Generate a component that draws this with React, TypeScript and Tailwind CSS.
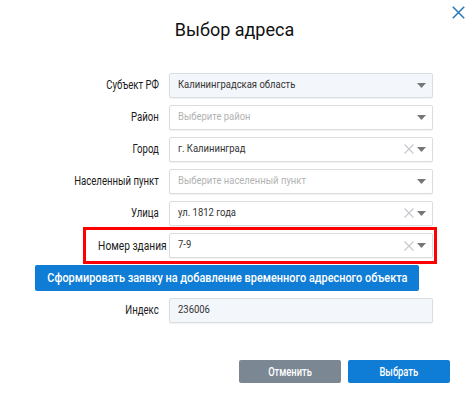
import React from 'react';

const Caret = () => (
  <svg width="9" height="5" viewBox="0 0 9 5" className="shrink-0">
    <path d="M0 0h9L4.5 5z" fill="#777" />
  </svg>
);

const Clear = () => (
  <svg width="10" height="10" viewBox="0 0 10 10" className="shrink-0">
    <path d="M0.5 0.5l9 9M9.5 0.5l-9 9" stroke="#c4c8cc" strokeWidth="1.1" />
  </svg>
);

// the original uses a condensed face everywhere; squeeze Roboto to match
const LeftNarrow = ({ children }: { children: React.ReactNode }) => (
  <span className="inline-block whitespace-nowrap origin-left scale-x-[0.86]">{children}</span>
);
const RightNarrow = ({ children }: { children: React.ReactNode }) => (
  <span className="inline-block whitespace-nowrap origin-right scale-x-[0.8]">{children}</span>
);

interface FieldProps {
  value?: string;
  placeholder?: string;
  clearable?: boolean;
  disabled?: boolean;
  noCaret?: boolean;
}

function Field({ value, placeholder, clearable, disabled, noCaret }: FieldProps) {
  return (
    <div
      className={`w-[264px] h-[25px] rounded-[2px] border border-[#dadde0] flex items-center pl-[8px] pr-[5px] shadow-[0_1px_1px_rgba(0,0,0,0.05)] ${
        disabled ? 'bg-[#f3f6fa]' : 'bg-white'
      }`}
    >
      <span className={`flex-1 text-[11px] overflow-hidden ${value ? 'text-[#333]' : 'text-[#b3b3b3]'}`}>
        <LeftNarrow>{value || placeholder}</LeftNarrow>
      </span>
      {clearable && <span className="mr-[2px] flex"><Clear /></span>}
      {!noCaret && <span className="ml-[1px] mr-[1px] flex"><Caret /></span>}
    </div>
  );
}

function Row({ label, children, className = '' }: { label: string; children: React.ReactNode; className?: string }) {
  return (
    <div className={`flex items-center ${className}`}>
      <div className="w-[159px] text-right text-[12px] text-[#1a1a1a]">
        <RightNarrow>{label}</RightNarrow>
      </div>
      <div className="ml-[10px]">{children}</div>
    </div>
  );
}

export default function App() {
  return (
    <div className="w-[469px] h-[395px] bg-white relative" style={{ fontFamily: 'Roboto, "Liberation Sans", sans-serif' }}>
      <button className="absolute left-[452px] top-[5px] w-[14px] h-[14px]">
        <svg width="13" height="13" viewBox="0 0 13 13">
          <path d="M0.8 0.8l11.4 11.4M12.2 0.8L0.8 12.2" stroke="#2b7bbb" strokeWidth="1.6" />
        </svg>
      </button>

      <div className="pt-[18px] text-center text-[18px] text-[#111] leading-[24px]">Выбор адреса</div>

      <div className="flex flex-col mt-[30px]">
        <Row label="Субъект РФ" className="h-[26px]">
          <Field value="Калининградская область" disabled />
        </Row>
        <Row label="Район" className="h-[26px] mt-[6px]">
          <Field placeholder="Выберите район" />
        </Row>
        <Row label="Город" className="h-[26px] mt-[6px]">
          <Field value="г. Калининград" clearable />
        </Row>
        <Row label="Населенный пункт" className="h-[26px] mt-[6px]">
          <Field placeholder="Выберите населенный пункт" />
        </Row>
        <Row label="Улица" className="h-[26px] mt-[6px]">
          <Field value="ул. 1812 года" clearable />
        </Row>

        <div className="ml-[83px] w-[354px] h-[37px] mt-[1px] border-[3px] border-[#ff0000] flex items-center">
          <div className="w-[73px] text-right text-[12px] text-[#1a1a1a]">
            <span className="inline-block whitespace-nowrap origin-right scale-x-[0.85]">Номер здания</span>
          </div>
          <div className="ml-[10px]">
            <Field value="7-9" clearable />
          </div>
        </div>

        <div className="ml-[35px] mt-[1px] w-[384px] h-[26px] rounded-[2px] bg-[#0f7dd6] text-white text-[13px] font-medium flex items-center justify-center overflow-hidden">
          <span className="inline-block whitespace-nowrap scale-x-[0.84]">
            Сформировать заявку на добавление временного адресного объекта
          </span>
        </div>

        <Row label="Индекс" className="h-[26px] mt-[6px]">
          <Field value="236006" disabled noCaret />
        </Row>
      </div>

      <div className="absolute left-[239px] top-[360px] flex gap-[7px]">
        <button className="w-[102px] h-[23px] rounded-[2px] bg-[#7b8893] text-white text-[12px] font-medium">
          <span className="inline-block whitespace-nowrap scale-x-[0.78]">Отменить</span>
        </button>
        <button className="w-[102px] h-[23px] rounded-[2px] bg-[#0f7dd6] text-white text-[12px] font-medium">
          <span className="inline-block whitespace-nowrap scale-x-[0.78]">Выбрать</span>
        </button>
      </div>
    </div>
  );
}
